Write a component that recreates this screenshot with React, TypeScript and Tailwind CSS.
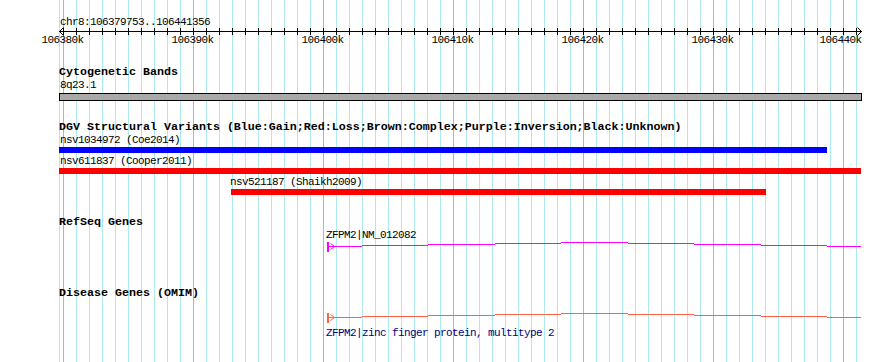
import React from "react";

const MINOR = "#aee9ef";
const MAJOR = "#8cc0e6";

function Grid() {
  const xs: { x: number; major: boolean }[] = [{ x: 59, major: false }];
  for (let k = 0; k < 62; k++) xs.push({ x: 63 + 13 * k, major: k % 10 === 0 });
  const labels = [
    { x: 62.5, t: "106380k" },
    { x: 192.5, t: "106390k" },
    { x: 322.5, t: "106400k" },
    { x: 452.5, t: "106410k" },
    { x: 582.5, t: "106420k" },
    { x: 712.5, t: "106430k" },
    { x: 840.5, t: "106440k" },
  ];
  return (
    <svg className="absolute inset-0" width={890} height={362}>
      {xs.map((l) => (
        <rect key={l.x} x={l.x} y={0} width={1} height={362} fill={l.major ? MAJOR : MINOR} />
      ))}
      <g shapeRendering="crispEdges">
        <rect x={59} y={31} width={803} height={1} fill="#000" />
        {xs.slice(1).map((l) => (
          <rect key={"t" + l.x} x={l.x} y={28} width={1} height={7} fill="#000" />
        ))}
      </g>
      <path d="M63.5 27.5 L59.5 31.5 L63.5 35.5" stroke="#000" fill="none" strokeWidth={1} />
      <path d="M857.5 27.5 L861.5 31.5 L857.5 35.5" stroke="#000" fill="none" strokeWidth={1} />
      {labels.map((l) => (
        <text
          key={l.t}
          x={l.x}
          y={43}
          textAnchor="middle"
          fontSize={11}
          letterSpacing={-0.6}
          fill="#000"
        >
          {l.t}
        </text>
      ))}
    </svg>
  );
}

function GeneGlyph({ color }: { color: string }) {
  const segs: [number, number, number][] = [
    [327, 362, 4],
    [362, 428, 3],
    [428, 495, 2],
    [495, 561, 1],
    [561, 628, 0],
    [628, 694, 1],
    [694, 761, 2],
    [761, 827, 3],
    [827, 861, 4],
  ];
  return (
    <svg width={890} height={10} className="block">
      <g shapeRendering="crispEdges">
        <rect x={327} y={0} width={2} height={10} fill={color} />
        {segs.map(([a, b, y]) => (
          <rect key={a} x={a} y={y} width={b - a} height={1} fill={color} />
        ))}
      </g>
      <path d="M330.5 1.5 L334.5 4.5 L330.5 7.5" stroke={color} fill="none" strokeWidth={1} />
    </svg>
  );
}

const small = "text-[11px] tracking-[-0.6px] leading-[13px] h-[13px] whitespace-nowrap";
const bold = "text-[11.667px] font-bold leading-[13px] h-[13px] whitespace-nowrap pl-[59px]";

export default function App() {
  return (
    <div className="relative w-[890px] h-[362px] overflow-hidden bg-white text-black font-['Liberation_Mono',monospace]">
      <Grid />
      <div className="relative">
        <div className={`${small} mt-[16px] pl-[60px]`}>chr8:106379753..106441356</div>

        <div className={`${bold} mt-[37px]`}>Cytogenetic Bands</div>
        <div className={`${small} pl-[60px]`}>8q23.1</div>
        <div className="mt-[1px] ml-[59px] w-[803px] h-[8px] border border-black bg-[#a9a9a9]" />

        <div className={`${bold} mt-[20px]`}>
          DGV Structural Variants (Blue:Gain;Red:Loss;Brown:Complex;Purple:Inversion;Black:Unknown)
        </div>
        <div className={`${small} pl-[60px]`}>nsv1034972 (Coe2014)</div>
        <div className="ml-[59px] w-[768px] h-[6px] bg-[#0000ff]" />
        <div className={`${small} mt-[2px] pl-[60px]`}>nsv611837 (Cooper2011)</div>
        <div className="ml-[59px] w-[802px] h-[6px] bg-[#ff0000]" />
        <div className={`${small} mt-[2px] pl-[230px]`}>nsv521187 (Shaikh2009)</div>
        <div className="ml-[231px] w-[535px] h-[6px] bg-[#ff0000]" />

        <div className={`${bold} mt-[21px]`}>RefSeq Genes</div>
        <div className={`${small} pl-[326px]`}>ZFPM2|NM_012082</div>
        <GeneGlyph color="#ff00ff" />

        <div className={`${bold} mt-[35px]`}>Disease Genes (OMIM)</div>
        <div className="mt-[13px]">
          <GeneGlyph color="#ff6347" />
        </div>
        <div className={`${small} mt-[4px] pl-[326px] text-[#000080]`}>
          ZFPM2|zinc finger protein, multitype 2
        </div>
      </div>
    </div>
  );
}
